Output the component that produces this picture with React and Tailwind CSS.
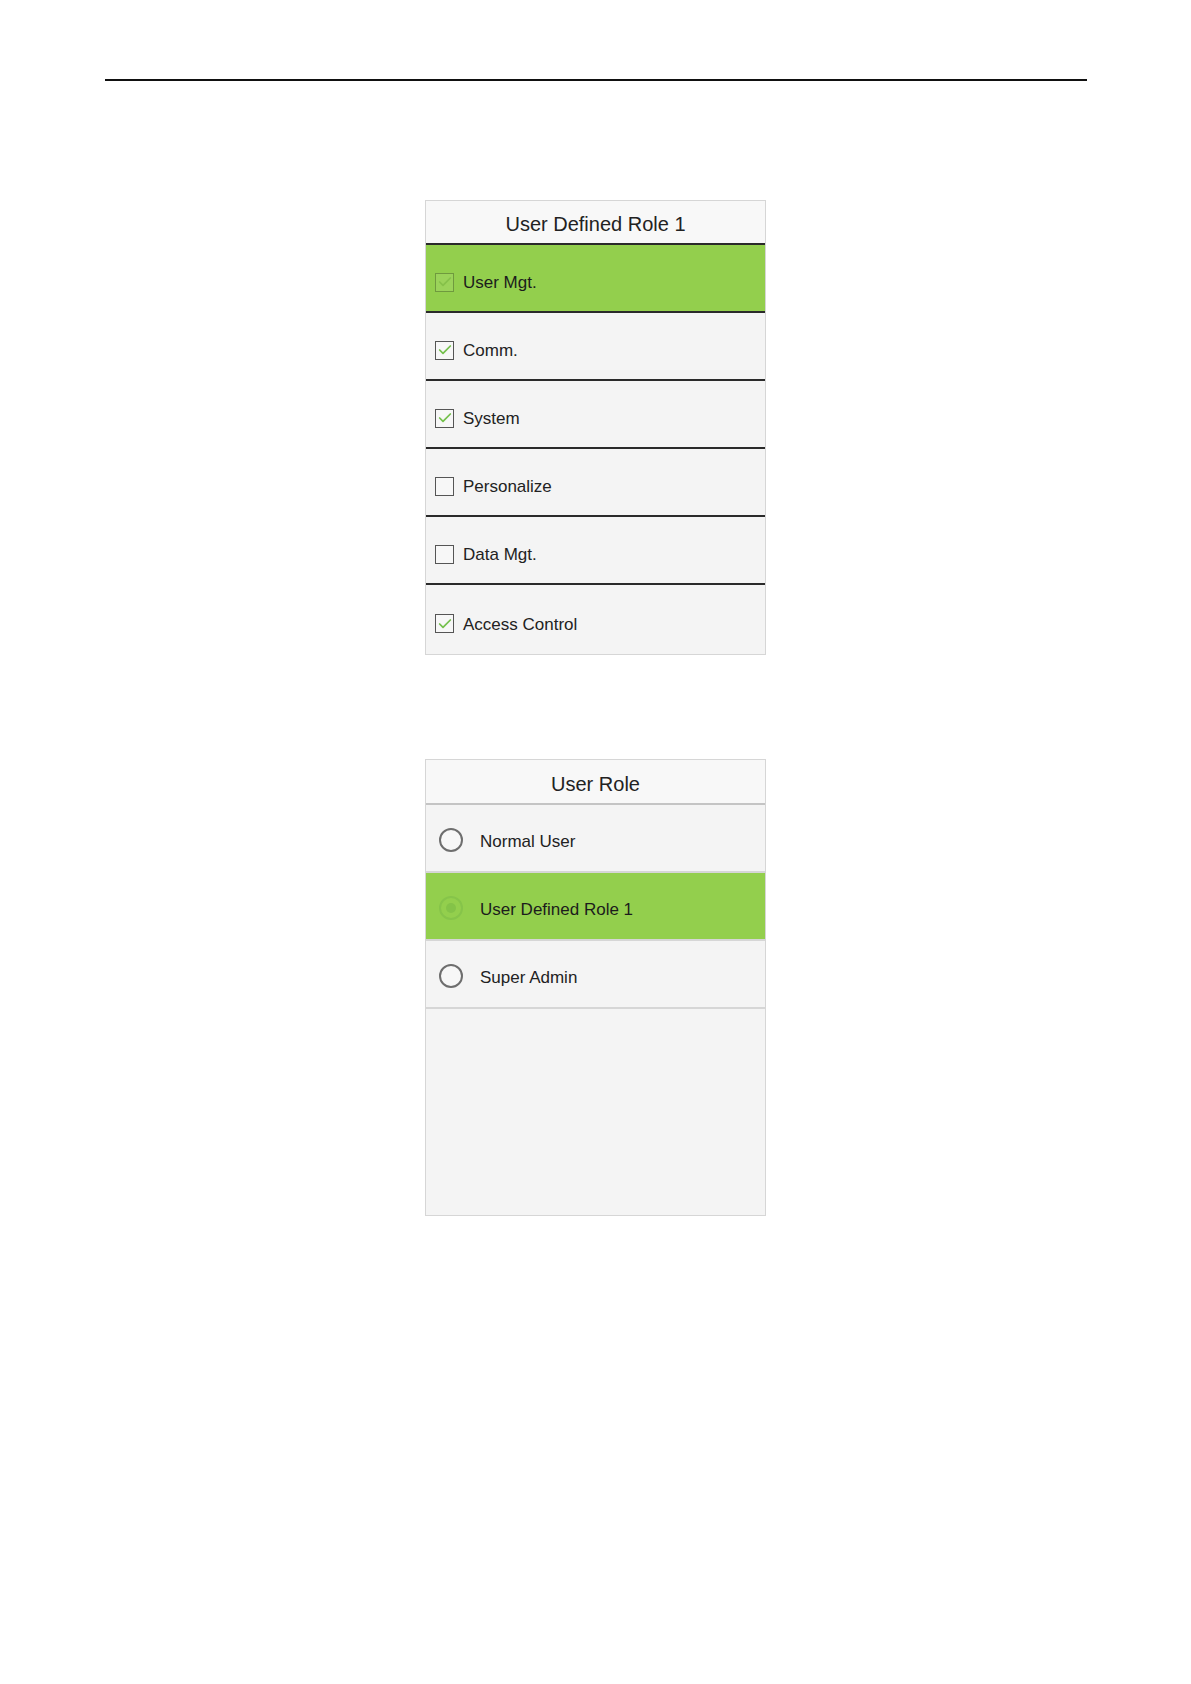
import { Check } from 'lucide-react';

const perms = [
  { label: 'User Mgt.', checked: true, active: true },
  { label: 'Comm.', checked: true },
  { label: 'System', checked: true },
  { label: 'Personalize', checked: false },
  { label: 'Data Mgt.', checked: false },
  { label: 'Access Control', checked: true },
];

const roles = [
  { label: 'Normal User' },
  { label: 'User Defined Role 1', active: true },
  { label: 'Super Admin' },
];

function Box({ checked, active }) {
  return (
    <div className={"flex h-[19px] w-[19px] shrink-0 items-center justify-center border-[1.5px] " + (active ? "border-[#6f9a3e] bg-[#9bd35a]" : "border-[#555] bg-[#f7f7f7]")}>
      {checked && <Check size={16} strokeWidth={2.6} className={active ? "text-[#86c14a]" : "text-[#74c04c]"} />}
    </div>
  );
}

function Radio({ active }) {
  if (active) return (
    <div className="flex h-[24px] w-[24px] shrink-0 items-center justify-center rounded-full border-2 border-[#86c44a]">
      <div className="h-[10px] w-[10px] rounded-full bg-[#84c348]" />
    </div>
  );
  return <div className="h-[24px] w-[24px] shrink-0 rounded-full border-2 border-[#6e6e6e] bg-[#f7f7f7]" />;
}

export default function App() {
  return (
    <div className="min-h-[1684px] bg-white pt-[79px] font-['Liberation_Sans',Arial,sans-serif] text-[#222]">
      <div className="mx-auto h-[2px] w-[982px] bg-[#111]" />

      <div className="mx-auto mt-[119px] w-[341px] border border-[#d6d6d6] bg-[#f4f4f4]">
        <div className="flex h-[44px] items-center justify-center border-b-2 border-[#2a2a2a] bg-[#f8f8f8] pt-[4px] text-[20px]">User Defined Role 1</div>
        {perms.map((p, i) => (
          <div key={p.label} className={"flex items-center gap-[9px] pl-[9px] pt-[8px] text-[17px] " + (i < perms.length - 1 ? "h-[68px] border-b-2 border-[#2a2a2a] " : "h-[69px] ") + (p.active ? "bg-[#93cf4d] text-[#1c1c1c]" : "")}>
            <Box checked={p.checked} active={p.active} />
            <span className="pt-[2px]">{p.label}</span>
          </div>
        ))}
      </div>

      <div className="mx-auto mt-[104px] w-[341px] border border-[#d6d6d6] bg-[#f4f4f4]">
        <div className="flex h-[45px] items-center justify-center border-b-2 border-[#c4c4c4] bg-[#f8f8f8] pt-[4px] text-[20px]">User Role</div>
        {roles.map(r => (
          <div key={r.label} className={"flex h-[68px] items-center gap-[17px] border-b-2 border-[#d6d6d6] pl-[13px] pt-[4px] text-[17px] " + (r.active ? "bg-[#93cf4d] text-[#1c1c1c]" : "")}>
            <Radio active={r.active} />
            <span className="pt-[3px]">{r.label}</span>
          </div>
        ))}
        <div className="h-[206px]" />
      </div>
    </div>
  );
}
